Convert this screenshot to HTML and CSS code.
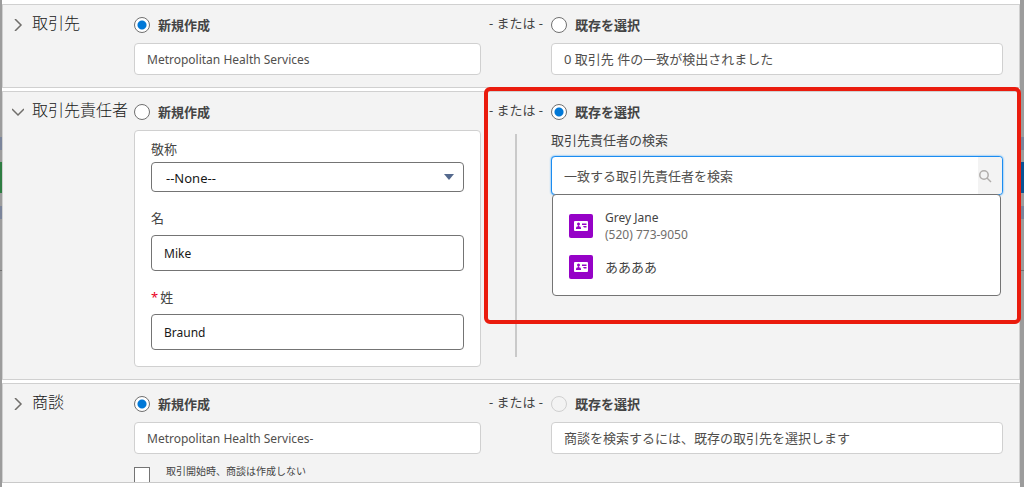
FILE: index.html
```html
<!DOCTYPE html>
<html lang="ja">
<head>
<meta charset="utf-8">
<meta name="viewport" content="width=device-width, initial-scale=1">
<title>取引の開始</title>
<link rel="stylesheet" href="styles.css">
</head>
<body>
<form class="modal">
  <div class="modal-body">
    <section class="section">
      <div class="heading">
        <button class="toggle" type="button" aria-label="取引先を展開"><svg viewBox="0 0 12 12"><path d="M3 0l6 6-6 6"/></svg></button>
        <h2>取引先</h2>
      </div>
      <div class="side">
        <label class="choice"><input class="radio" type="radio" name="account" checked>新規作成</label>
        <input class="box" type="text" aria-label="取引先名" value="Metropolitan Health Services">
      </div>
      <div class="middle"><span class="or">- または -</span></div>
      <div class="side">
        <label class="choice"><input class="radio" type="radio" name="account">既存を選択</label>
        <div class="box">0 取引先 件の一致が検出されました</div>
      </div>
    </section>

    <section class="section">
      <div class="heading">
        <button class="toggle" type="button" aria-label="取引先責任者を折りたたむ"><svg viewBox="0 0 12 12"><path d="M0 3l6 6 6-6"/></svg></button>
        <h2>取引先責任者</h2>
      </div>
      <div class="side">
        <label class="choice"><input class="radio" type="radio" name="contact">新規作成</label>
        <div class="panel">
          <div class="field field-select">
            <label for="salutation">敬称</label>
            <div class="select-wrap">
              <select id="salutation"><option>--None--</option></select>
              <svg class="arrow" viewBox="0 0 10 6"><path d="M0 0h10L5 6z"/></svg>
            </div>
          </div>
          <div class="field">
            <label for="first">名</label>
            <input id="first" type="text" value="Mike">
          </div>
          <div class="field">
            <label for="last"><span class="required">*</span>姓</label>
            <input id="last" type="text" value="Braund" required>
          </div>
        </div>
      </div>
      <div class="middle"><span class="or">- または -</span><span class="rule"></span></div>
      <div class="side">
        <label class="choice"><input class="radio" type="radio" name="contact" checked>既存を選択</label>
        <label class="search-label" for="search">取引先責任者の検索</label>
        <div class="search">
          <input id="search" type="text" placeholder="一致する取引先責任者を検索">
          <span class="search-icon"><svg viewBox="0 0 14 14"><circle cx="6" cy="6" r="4.200"/><path d="M9 9l4 4"/></svg></span>
          <ul class="results">
            <li>
              <svg class="contact-icon" viewBox="0 0 24 24"><rect class="tile" width="24" height="24" rx="2"/><rect class="card" x="5" y="7" width="14" height="10" rx="1"/><circle class="tile" cx="9.500" cy="10" r="1.500"/><path class="tile" d="M7 15v-1q0-1.500 2-1.700v-1h1v1q2 .2 2 1.700v1zM13 9.500h4.500V11H13zM14 12h3.500v1.500H15z"/></svg>
              <span class="person"><span>Grey Jane</span><span class="phone">(520) 773-9050</span></span>
            </li>
            <li>
              <svg class="contact-icon" viewBox="0 0 24 24"><rect class="tile" width="24" height="24" rx="2"/><rect class="card" x="5" y="7" width="14" height="10" rx="1"/><circle class="tile" cx="9.500" cy="10" r="1.500"/><path class="tile" d="M7 15v-1q0-1.500 2-1.700v-1h1v1q2 .2 2 1.700v1zM13 9.500h4.500V11H13zM14 12h3.500v1.500H15z"/></svg>
              <span class="person">ああああ</span>
            </li>
          </ul>
        </div>
      </div>
      <div class="highlight"></div>
    </section>

    <section class="section">
      <div class="heading">
        <button class="toggle" type="button" aria-label="商談を展開"><svg viewBox="0 0 12 12"><path d="M3 0l6 6-6 6"/></svg></button>
        <h2>商談</h2>
      </div>
      <div class="side">
        <label class="choice"><input class="radio" type="radio" name="deal" checked>新規作成</label>
        <input class="box" type="text" aria-label="商談名" value="Metropolitan Health Services-">
        <label class="skip"><input class="check" type="checkbox">取引開始時、商談は作成しない</label>
      </div>
      <div class="middle"><span class="or">- または -</span></div>
      <div class="side">
        <label class="choice"><input class="radio" type="radio" name="deal" disabled>既存を選択</label>
        <div class="box">商談を検索するには、既存の取引先を選択します</div>
      </div>
    </section>
  </div>
</form>
</body>
</html>
```
FILE: styles.css
```css
* {
  box-sizing: border-box;
}

body {
  margin: 0;
  overflow: hidden;
  font: 13px/18px "Noto Sans", "Noto Sans CJK JP", sans-serif;
  color: #444;
  background:
    linear-gradient(#9c9c9c 137px, #7b859b 137px 150px, #9c9c9c 150px 162px, #2e7d42 162px 193px, #9c9c9c 193px 206px, #7b859b 206px 219px, #9c9c9c 219px 270px, #707070 270px 271px, #9c9c9c 271px) left / 50% 100% no-repeat,
    linear-gradient(#9c9c9c 137px, #7b859b 137px 150px, #9c9c9c 150px 162px, #0b5394 162px 193px, #9c9c9c 193px 206px, #7b859b 206px 219px, #9c9c9c 219px 270px, #707070 270px 271px, #9c9c9c 271px) right / 50% 100% no-repeat;
}

input,
select,
button {
  font: inherit;
  color: inherit;
  margin: 0;
}

.modal {
  height: 100vh;
  margin: 0 4px 0 2px;
  padding: 4px 0;
  background: #fff;
}

.modal-body {
  height: 100%;
  display: flex;
  flex-direction: column;
  gap: 3px;
  overflow-y: clip;
  border-bottom: 1px solid #c9c9c9;
}

.section {
  position: relative;
  flex: none;
  display: grid;
  grid-template-columns: 122px minmax(0, 347fr) 70px minmax(0, 452fr);
  padding: 8px 16px 12px 9px;
  background: #f3f3f3;
  border: 1px solid #d0d0d0;
}

.heading {
  display: flex;
  align-items: flex-start;
  gap: 8px;
}

.heading h2 {
  margin: 0;
  font-size: 16px;
  font-weight: 300;
  line-height: 20px;
  color: #181818;
  white-space: nowrap;
}

.toggle {
  display: flex;
  padding: 6px 0 0;
  border: 0;
  background: none;
}

.toggle svg {
  width: 12px;
  height: 12px;
  fill: none;
  stroke: #706e6b;
  stroke-width: 1.5;
}

.side {
  display: flex;
  flex-direction: column;
  gap: 6px;
}

.choice {
  display: flex;
  align-items: center;
  gap: 8px;
  height: 24px;
  font-weight: 700;
}

.radio {
  appearance: none;
  width: 16px;
  height: 16px;
  border: 1px solid #707070;
  border-radius: 50%;
  background: #fff;
}

.radio:checked {
  background: radial-gradient(circle, #0078d7 4px, #fff 5px);
}

.radio:disabled {
  border-color: #d0d0d0;
  background: #f3f3f3;
}

.box {
  width: 100%;
  height: 32px;
  padding: 0 12px;
  font-size: 12px;
  line-height: 30px;
  color: #514f4d;
  background: #fff;
  border: 1px solid #d0d0d0;
  border-radius: 4px;
}

div.box {
  font-size: 13px;
}

.middle {
  display: flex;
  flex-direction: column;
  align-items: center;
}

.or {
  line-height: 20px;
  white-space: nowrap;
}

.rule {
  flex: 1;
  width: 2px;
  margin: 14px 0 10px;
  background: #c9c9c9;
}

.panel {
  display: flex;
  flex-direction: column;
  gap: 17px;
  padding: 9px 16px 16px;
  background: #fff;
  border: 1px solid #d0d0d0;
  border-radius: 4px;
}

.field {
  display: flex;
  flex-direction: column;
  gap: 8px;
}

.field-select {
  gap: 4px;
}

.field input,
.field select {
  width: 100%;
  height: 36px;
  padding: 0 12px;
  font-size: 12px;
  color: #181818;
  background: #fff;
  border: 1px solid #747474;
  border-radius: 4px;
}

.field select {
  appearance: none;
  display: block;
  height: 30px;
  padding: 2px 14px 0;
  font-size: 13px;
}

.select-wrap {
  position: relative;
}

.arrow {
  position: absolute;
  right: 10px;
  top: 12px;
  width: 10px;
  height: 6px;
  fill: #54698d;
}

.required {
  margin-right: 2px;
  color: #ea001e;
}

.search-label {
  line-height: 20px;
}

.search {
  position: relative;
  display: flex;
  height: 39px;
  background: #fff;
  border: 1px solid #1b8cf0;
  border-radius: 4px;
  box-shadow: 0 0 2px #1b96ff;
}

.search input {
  flex: 1;
  min-width: 0;
  padding: 0 12px;
  background: none;
  border: 0;
  outline: 0;
}

.search input::placeholder {
  color: #514f4d;
}

.search-icon {
  display: flex;
  align-items: center;
  width: 24px;
  background: #f3f3f3;
  border-radius: 0 3px 3px 0;
}

.search-icon svg {
  width: 14px;
  height: 14px;
  fill: none;
  stroke: #b0adab;
  stroke-width: 1.5;
}

.results {
  position: absolute;
  top: 100%;
  left: 0;
  right: 1px;
  display: flex;
  flex-direction: column;
  gap: 12px;
  margin: 0;
  padding: 14px 16px 16px;
  list-style: none;
  background: #fff;
  border: 1px solid #747474;
  border-radius: 4px;
}

.results li {
  display: flex;
  align-items: center;
  gap: 12px;
}

.contact-icon {
  width: 24px;
  height: 24px;
}

.tile {
  fill: #9602c7;
}

.card {
  fill: #fff;
}

.person {
  display: flex;
  flex-direction: column;
  line-height: 17px;
}

.person span {
  font-size: 12px;
}

.person .phone {
  color: #706e6b;
}

.highlight {
  position: absolute;
  grid-column: 3 / 5;
  inset: -5px -18px 55px 3px;
  border: 4px solid #ea1b0d;
  border-radius: 6px;
  pointer-events: none;
}

.skip {
  display: flex;
  align-items: flex-start;
  gap: 16px;
  padding-top: 6px;
  font-size: 10px;
  line-height: 10px;
}

.check {
  appearance: none;
  width: 16px;
  height: 16px;
  margin-top: 1px;
  border: 1px solid #747474;
  background: #fff;
}
```
